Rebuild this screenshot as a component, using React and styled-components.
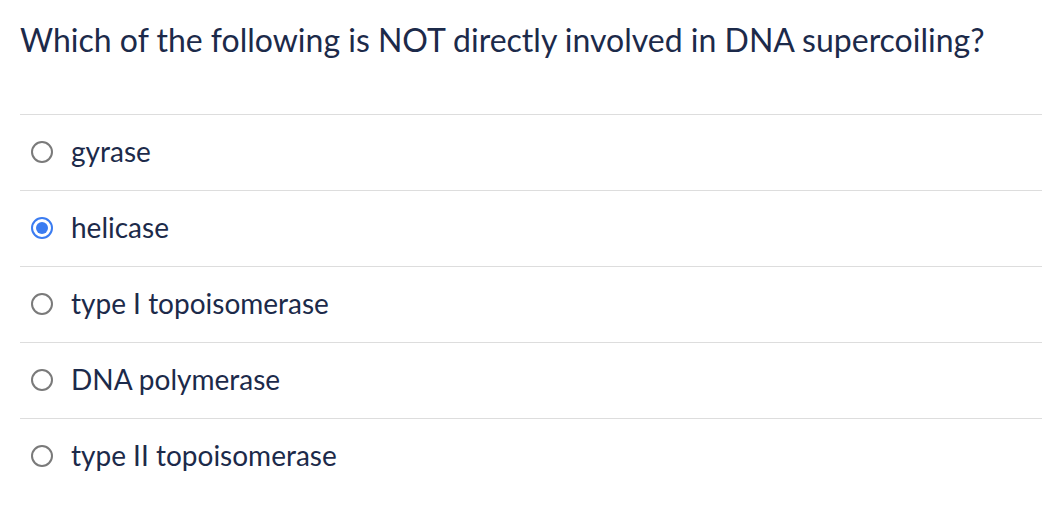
import React, { useState } from 'react';
import styled, { createGlobalStyle } from 'styled-components';

const GlobalStyle = createGlobalStyle`
  body {
    margin: 0;
    background: #ffffff;
    font-family: Lato, "Open Sans", sans-serif;
  }
`;

const Page = styled.div`
  padding: 20px 0 0 20px;
`;

const Question = styled.h1`
  margin: 0 0 54px 0;
  font-size: 32px;
  font-weight: 400;
  line-height: 40px;
  color: #1c2a4a;
`;

const OptionList = styled.div`
  display: flex;
  flex-direction: column;
`;

const OptionRow = styled.label`
  display: flex;
  align-items: center;
  height: 75px;
  border-top: 1px solid #dddddd;
  cursor: pointer;
`;

const Radio = styled.span`
  box-sizing: border-box;
  flex-shrink: 0;
  width: 22px;
  height: 22px;
  margin-left: 11px;
  margin-right: 18px;
  margin-top: -2px;
  border-radius: 50%;
  border: 2px solid ${(p) => (p.checked ? '#3b7cf1' : '#7a7a7a')};
  display: flex;
  align-items: center;
  justify-content: center;

  &::after {
    content: '';
    width: 12px;
    height: 12px;
    border-radius: 50%;
    background: #3b7cf1;
    display: ${(p) => (p.checked ? 'block' : 'none')};
  }
`;

const OptionText = styled.span`
  font-size: 28px;
  line-height: 34px;
  margin-top: -4px;
  color: #1c2a4a;
`;

const options = [
  'gyrase',
  'helicase',
  'type I topoisomerase',
  'DNA polymerase',
  'type II topoisomerase',
];

const App = () => {
  const [selected, setSelected] = useState(1);

  return (
    <Page>
      <GlobalStyle />
      <Question>Which of the following is NOT directly involved in DNA supercoiling?</Question>
      <OptionList>
        {options.map((opt, i) => (
          <OptionRow key={opt} onClick={() => setSelected(i)}>
            <Radio checked={selected === i} />
            <OptionText>{opt}</OptionText>
          </OptionRow>
        ))}
      </OptionList>
    </Page>
  );
};

export default App;
